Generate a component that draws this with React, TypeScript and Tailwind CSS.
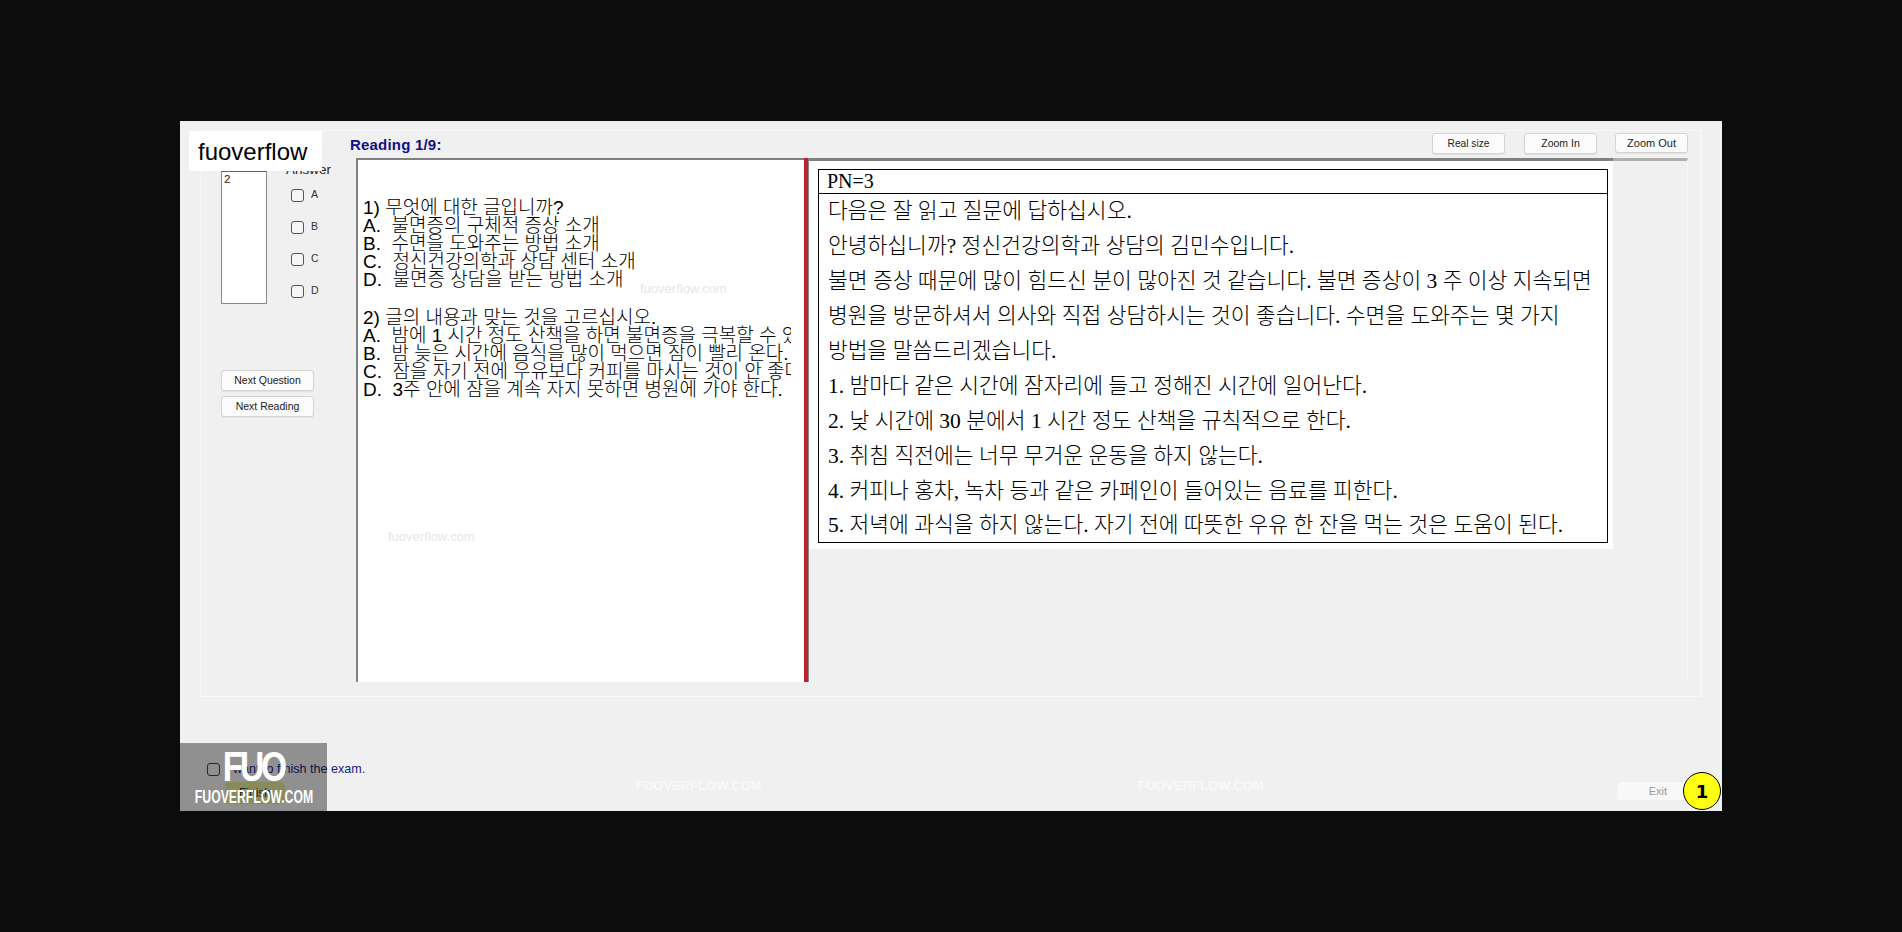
import React from "react";

const KR = "font-['Liberation_Sans','Noto_Sans_CJK_KR',sans-serif]";

function WinButton({ label, className = "" }: { label: string; className?: string }) {
  return (
    <button className={`flex items-center justify-center rounded-[3px] border border-[#d4d4d4] bg-[#fbfbfb] text-[#222] shadow-[0_1px_1px_rgba(0,0,0,0.06)] ${className}`}>
      {label}
    </button>
  );
}

function Answer({ label }: { label: string }) {
  return (
    <div className="flex h-[32px] items-center pl-[5px]">
      <span className="h-[13px] w-[13px] rounded-[3px] border border-[#555] bg-[#f6f6f6]" />
      <span className="ml-[7px] text-[10.5px] text-[#333]">{label}</span>
    </div>
  );
}

const questions = [
  "",
  "",
  "1) 무엇에 대한 글입니까?",
  "A.  불면증의 구체적 증상 소개",
  "B.  수면을 도와주는 방법 소개",
  "C.  정신건강의학과 상담 센터 소개",
  "D.  불면증 상담을 받는 방법 소개",
  "",
  "2) 글의 내용과 맞는 것을 고르십시오.",
  "A.  밤에 1 시간 정도 산책을 하면 불면증을 극복할 수 있다.",
  "B.  밤 늦은 시간에 음식을 많이 먹으면 잠이 빨리 온다.",
  "C.  잠을 자기 전에 우유보다 커피를 마시는 것이 안 좋다.",
  "D.  3주 안에 잠을 계속 자지 못하면 병원에 가야 한다.",
];

const passage = [
  "다음은 잘 읽고 질문에 답하십시오.",
  "안녕하십니까? 정신건강의학과 상담의 김민수입니다.",
  "불면 증상 때문에 많이 힘드신 분이 많아진 것 같습니다. 불면 증상이 3 주 이상 지속되면",
  "병원을 방문하셔서 의사와 직접 상담하시는 것이 좋습니다. 수면을 도와주는 몇 가지",
  "방법을 말씀드리겠습니다.",
  "1. 밤마다 같은 시간에 잠자리에 들고 정해진 시간에 일어난다.",
  "2. 낮 시간에 30 분에서 1 시간 정도 산책을 규칙적으로 한다.",
  "3. 취침 직전에는 너무 무거운 운동을 하지 않는다.",
  "4. 커피나 홍차, 녹차 등과 같은 카페인이 들어있는 음료를 피한다.",
  "5. 저녁에 과식을 하지 않는다. 자기 전에 따뜻한 우유 한 잔을 먹는 것은 도움이 된다.",
];

export default function App() {
  return (
    <div className="h-[932px] w-[1902px] overflow-hidden bg-[#0c0c0c] pl-[180px] pt-[121px] font-['Liberation_Sans',sans-serif]">
      <div className="relative flex h-[690px] w-[1542px] flex-col bg-[#f0f0f0] pl-[20px] pt-[9px]">
        {/* group box */}
        <div className="flex h-[567px] w-[1502px] border border-[#f8f8f8]">
          {/* sidebar */}
          <div className="flex w-[149px] flex-col pl-[20px] pt-[37px]">
            <div className="flex">
              <div className="h-[136px] w-[46px] border border-[#888] bg-white">
                <div className="h-[3px] bg-[#0078d7]" />
                <div className="pl-[2px] text-[11.5px] leading-[14px] text-[#222]">2</div>
              </div>
              <div className="ml-[19px] flex flex-col">
                <div className="h-[14px] text-[13.5px] leading-[3px] text-[#222]">Answer</div>
                <div className="mt-[-3px]">
                  <Answer label="A" />
                  <Answer label="B" />
                  <Answer label="C" />
                  <Answer label="D" />
                </div>
              </div>
            </div>
            <WinButton label="Next Question" className="mt-[63px] h-[21px] w-[93px] text-[10.5px]" />
            <WinButton label="Next Reading" className="mt-[5px] h-[21px] w-[93px] text-[10.5px]" />
          </div>

          {/* main */}
          <div className="flex w-[1338px] flex-col">
            <div className="flex h-[27px] items-start">
              <div className="pt-[6px] text-[15px] font-bold leading-[16px] tracking-[0.2px] text-[#10108a]">Reading 1/9:</div>
              <div className="ml-auto flex items-start pt-[2px]">
                <WinButton label="Real size" className="h-[21px] w-[73px] text-[10.2px]" />
                <WinButton label="Zoom In" className="ml-[19px] h-[21px] w-[73px] text-[10.5px]" />
                <WinButton label="Zoom Out" className="ml-[18px] h-[20px] w-[73px] text-[11px]" />
              </div>
            </div>
            <div className="ml-[6px] flex h-[524px] w-[1332px]">
              {/* question panel */}
              <div className={`h-full w-[448px] overflow-hidden whitespace-pre border-l-2 border-t-2 border-[#808080] bg-white pl-[5px] pt-[3px] text-[19px] font-light leading-[18px] text-black ${KR}`}>
                {questions.map((q, i) => (
                  <div key={i} className={`${i === 7 ? "h-[20px]" : "h-[18px]"} w-[428px] overflow-x-clip`}>{q}</div>
                ))}
              </div>
              {/* splitter */}
              <div className="w-[5px] border-r border-[#888] bg-[#bb2329]" />
              {/* reading panel */}
              <div className="flex-1 border-r border-t-[3px] border-r-[#f8f8f8] border-t-[#b0b0b0]">
                <div className="mt-[-3px] h-[391px] w-[804px] border-t-[3px] border-[#808080] bg-white pl-[9px] pt-[8px]">
                  <div className="h-[374px] w-[790px] border border-black font-['Liberation_Serif','Noto_Sans_CJK_KR',serif] text-black">
                    <div className="h-[24px] border-b border-black pl-[8px] text-[20px] leading-[22px]">PN=3</div>
                    <div className="pl-[9px] text-[21.5px] font-light leading-[35px]">
                      {passage.map((p, i) => (
                        <div key={i} className="h-[34.95px] whitespace-nowrap">{p}</div>
                      ))}
                    </div>
                  </div>
                </div>
              </div>
            </div>
          </div>
        </div>

        {/* footer */}
        <div className="mt-[64px] flex items-center pl-[7px]">
          <span className="h-[13px] w-[13px] rounded-[3px] border border-[#444] bg-[#eee]" />
          <span className="ml-[6px] text-[12.6px] leading-[16px] text-[#1c1c80]">I want to finish the exam.</span>
        </div>
        <div className="mt-[5px] flex items-start">
          <div className="ml-[25px] flex h-[22px] w-[60px] items-center justify-center rounded-[3px] bg-[#e4e89a] text-[12px] text-[#333]">Finish</div>
          <div className="ml-[1333px] flex h-[18px] w-[72px] items-center justify-end rounded-[2px] bg-[#f8f8f8] pr-[23px] text-[11px] text-[#999]">Exit</div>
        </div>

        {/* overlays */}
        <div className="absolute left-[9px] top-[10px] flex h-[40px] w-[133px] items-center bg-white pl-[9px] pt-[2px] text-[24px] text-black">fuoverflow</div>
        <div className="absolute bottom-0 left-0 flex h-[68px] w-[147px] flex-col items-center bg-black/40 text-white">
          <div className="mt-[8px] origin-center scale-x-[0.8] text-[42px] font-bold leading-[32px] tracking-[-4px]">FUO</div>
          <div className="mt-[4px] w-[200px] origin-center scale-x-[0.68] whitespace-nowrap text-center text-[18px] font-bold leading-[20px]">FUOVERFLOW.COM</div>
        </div>
        <div className="absolute bottom-[1px] right-[1px] flex h-[38px] w-[38px] items-center justify-center rounded-full border border-black bg-[#ffff14] font-['DejaVu_Sans',sans-serif] text-[18px] font-bold text-black">1</div>
        <div className="absolute left-[456px] top-[655px] text-[13px] font-bold text-white/60">FUOVERFLOW.COM</div>
        <div className="absolute left-[958px] top-[655px] text-[13px] font-bold text-white/60">FUOVERFLOW.COM</div>
        <div className="absolute left-[460px] top-[158px] text-[13px] text-[#e6e6e6]">fuoverflow.com</div>
        <div className="absolute left-[208px] top-[406px] text-[13px] text-[#e6e6e6]">fuoverflow.com</div>
      </div>
    </div>
  );
}
